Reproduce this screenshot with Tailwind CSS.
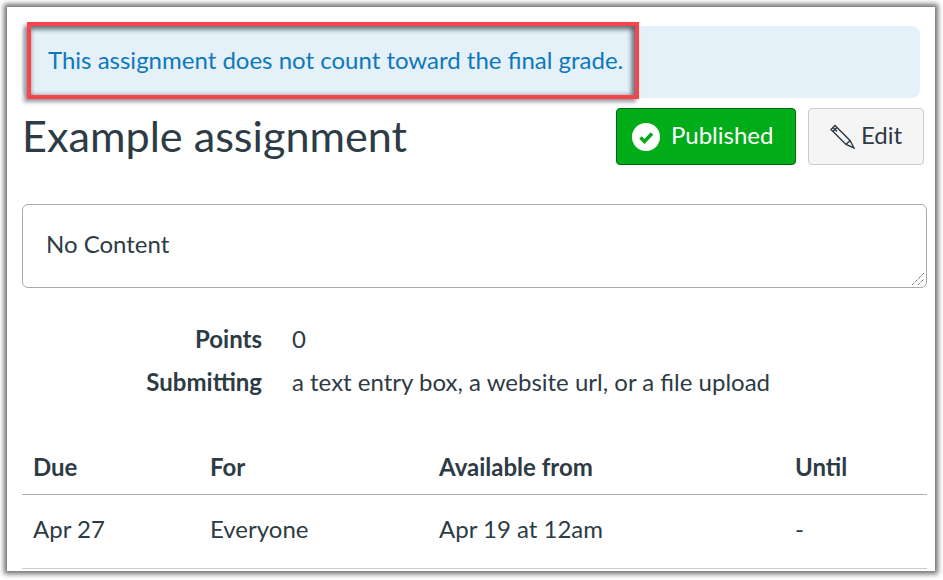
<!DOCTYPE html>
<html lang="en">
<head>
    <meta charset="UTF-8">
    <title>Example assignment</title>
    <script src="https://cdn.jsdelivr.net/npm/@tailwindcss/browser@4"></script>
</head>
<body class="bg-white h-[580px] overflow-hidden font-['Lato','Carlito',sans-serif] text-[#2d3b45]">
    <div class="relative ml-[7px] mt-[7px] w-[928px] h-[564px] bg-white shadow-[0_0_5px_3px_#707070]">
        <div class="pl-[15px] pr-[8px] pt-[19px]">
            <!-- alert -->
            <div class="w-[898px] h-[72px] rounded-lg bg-[#e5f1f8] pl-[26px] pt-[19px] text-[24px] leading-[30px] text-[#0e78bd]">This assignment does not count toward the final grade.</div>

            <!-- header -->
            <div class="flex mt-[10px] h-[57px] w-[902px]">
                <h1 class="text-[43.2px] leading-[54px] font-normal">Example assignment</h1>
                <button class="ml-auto w-[180px] h-[57px] flex items-center pl-[15px] pb-[3px] rounded bg-[#00ac18] border border-[#006a0f] text-white text-[24px]">
                    <svg class="w-[28px] h-[28px] mr-[11px] mt-[3px]" viewBox="0 0 28 28"><circle cx="14" cy="14" r="14" fill="#fff"/><path d="M8.5 14.5l4 4 7.5-8" fill="none" stroke="#00ac18" stroke-width="3.5"/></svg>
                    Published
                </button>
                <button class="ml-[12px] w-[116px] h-[57px] flex items-center pl-[21px] pb-[3px] rounded bg-[#f5f5f5] border border-[#c7cdd1] text-[24px]">
                    <svg class="w-[25px] h-[25px] mr-[6px] mt-[3px]" viewBox="0 0 25 25" fill="none" stroke="#2d3b45" stroke-width="1.4"><path d="M1 5.5L5 1.5L20 16.5L24 24L16 20.5Z"/><path d="M3 3.5L7 7.5M7 3.5L3 7.5M16 20.5L20 16.5"/></svg>
                    Edit
                </button>
            </div>

            <!-- content box -->
            <div class="relative mt-[39px] w-[905px] h-[84px] rounded-md border border-[#a9a9a9] pl-[23px] pt-[24px] text-[24px] leading-[30px]">No Content
                <svg class="absolute right-[2px] bottom-[2px] w-[13px] h-[13px]" viewBox="0 0 13 13" stroke="#333" stroke-width="1" stroke-dasharray="1 1"><path d="M1 13L13 1M7 13L13 7"/></svg>
            </div>

            <!-- details -->
            <div class="mt-[36px] grid grid-cols-[240px_1fr] gap-x-[30px] gap-y-[13px] text-[24px] leading-[30px]">
                <div class="text-right font-bold">Points</div><div>0</div>
                <div class="text-right font-bold">Submitting</div><div>a text entry box, a website url, or a file upload</div>
            </div>

            <!-- dates table -->
            <div class="mt-[55px] w-[905px] text-[24px] leading-[30px]">
                <div class="grid grid-cols-[177px_229px_356px_1fr] pl-[11px] pb-[12px] border-b border-[#a5afb5] font-bold">
                    <div>Due</div><div>For</div><div>Available from</div><div>Until</div>
                </div>
                <div class="grid grid-cols-[177px_229px_356px_1fr] pl-[11px] pt-[19px] pb-[24px] border-b border-[#c7cdd1]">
                    <div>Apr 27</div><div>Everyone</div><div>Apr 19 at 12am</div><div>-</div>
                </div>
            </div>
        </div>

        <!-- red callout over the alert -->
        <div class="absolute left-[20px] top-[15px] w-[612px] h-[77px] border-[4px] border-[#f94449] pointer-events-none shadow-[inset_0_4px_4px_rgba(60,70,80,0.6),inset_-4px_0_4px_rgba(60,70,80,0.6),-3px_3px_4px_rgba(60,70,80,0.55)]"></div>
    </div>
</body>
</html>
